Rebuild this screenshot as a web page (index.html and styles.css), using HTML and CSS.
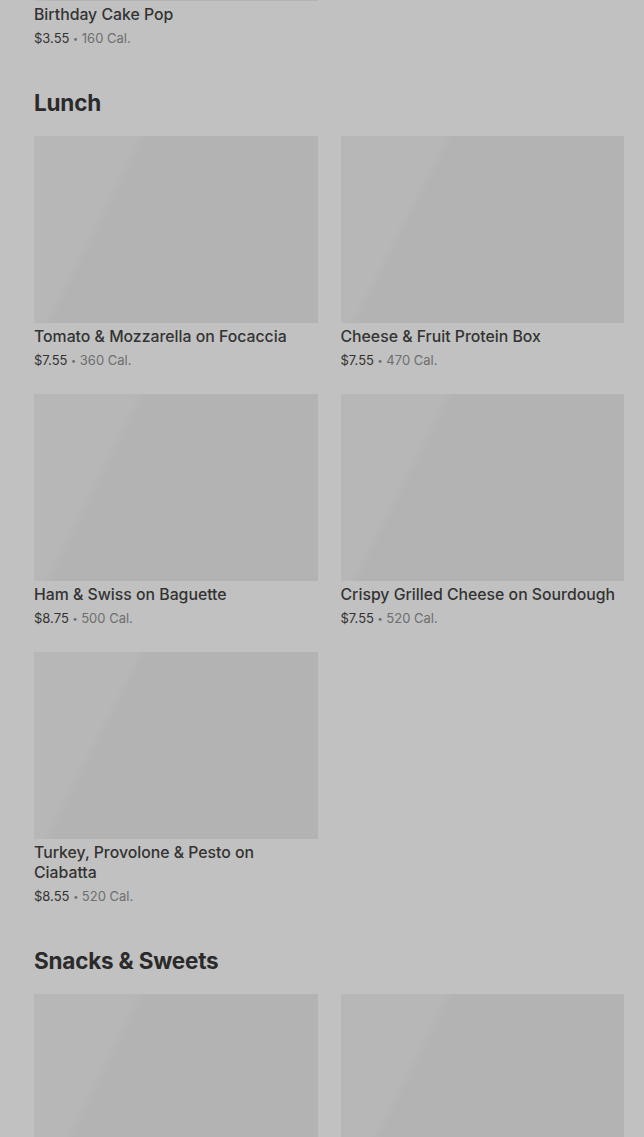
FILE: index.html
```html
<!DOCTYPE html>
<html lang="en">

<head>
  <meta charset="UTF-8" />
  <meta name="viewport" content="width=device-width, initial-scale=1.0" />
  <title>Menu</title>
  <link rel="stylesheet" href="styles.css">
</head>

<body>
  <div class="menu">
    <section class="menu-section menu-section-first">
      <div class="item-grid">
        <div class="item">
          <div class="item-img"></div>
          <p class="item-name">Birthday Cake Pop</p>
          <p class="item-meta"><span class="price">$3.55</span> <span class="dot">•</span> 160 Cal.</p>
        </div>
      </div>
    </section>

    <section class="menu-section">
      <h2 class="section-title">Lunch</h2>
      <div class="item-grid">
        <div class="item">
          <div class="item-img"></div>
          <p class="item-name">Tomato &amp; Mozzarella on Focaccia</p>
          <p class="item-meta"><span class="price">$7.55</span> <span class="dot">•</span> 360 Cal.</p>
        </div>
        <div class="item">
          <div class="item-img"></div>
          <p class="item-name">Cheese &amp; Fruit Protein Box</p>
          <p class="item-meta"><span class="price">$7.55</span> <span class="dot">•</span> 470 Cal.</p>
        </div>
        <div class="item">
          <div class="item-img"></div>
          <p class="item-name">Ham &amp; Swiss on Baguette</p>
          <p class="item-meta"><span class="price">$8.75</span> <span class="dot">•</span> 500 Cal.</p>
        </div>
        <div class="item">
          <div class="item-img"></div>
          <p class="item-name">Crispy Grilled Cheese on Sourdough</p>
          <p class="item-meta"><span class="price">$7.55</span> <span class="dot">•</span> 520 Cal.</p>
        </div>
        <div class="item">
          <div class="item-img"></div>
          <p class="item-name">Turkey, Provolone &amp; Pesto on Ciabatta</p>
          <p class="item-meta"><span class="price">$8.55</span> <span class="dot">•</span> 520 Cal.</p>
        </div>
      </div>
    </section>

    <section class="menu-section">
      <h2 class="section-title">Snacks &amp; Sweets</h2>
      <div class="item-grid">
        <div class="item">
          <div class="item-img"></div>
        </div>
        <div class="item">
          <div class="item-img"></div>
        </div>
      </div>
    </section>
  </div>
</body>

</html>
```

FILE: styles.css
```css
* {
  box-sizing: border-box;
}

html,
body {
  margin: 0;
  background: #c1c1c1;
  font-family: Inter, "Noto Sans", sans-serif;
  color: #303030;
}

.menu {
  padding: 0 20px 0 34px;
  margin-top: -186px;
}

.menu-section {
  margin-bottom: 41px;
}

.section-title {
  margin: 0 0 19px 0;
  height: 28px;
  font-size: 22.5px;
  line-height: 28px;
  font-weight: 700;
  color: #2b2b2b;
  letter-spacing: -0.2px;
}

.item-grid {
  display: grid;
  grid-template-columns: 1fr 1fr;
  column-gap: 23px;
  row-gap: 24px;
}

.item-img {
  height: 187px;
  background: linear-gradient(117deg, #b7b7b7 27%, #b3b3b3 30%);
}

.item-name {
  margin: 4px 0 0 0;
  font-size: 15.8px;
  line-height: 20px;
  font-weight: 500;
  color: #333;
}

.item-meta {
  margin: 3px 0 0 0;
  height: 20px;
  font-size: 13px;
  line-height: 20px;
  color: #6e6e6e;
}

.item-meta .price {
  color: #333;
}

.item-meta .dot {
  font-size: 9px;
  position: relative;
  top: -1px;
}
```
